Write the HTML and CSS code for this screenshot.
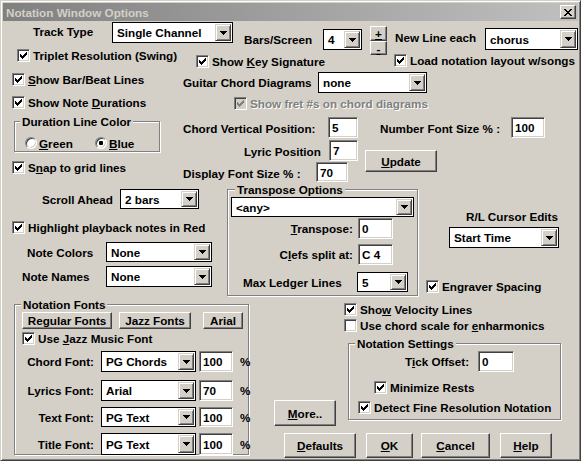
FILE: index.html
```html
<!DOCTYPE html>
<html lang="en">

<head>
    <meta charset="UTF-8">
    <meta name="viewport" content="width=device-width, initial-scale=1.0">
    <title>Notation Window Options</title>
    <link rel="stylesheet" href="styles.css">
</head>

<body>
    <div class="window">
        <div class="titlebar">
            <span class="title">Notation Window Options</span>
            <button class="close-btn" type="button">
                <svg width="8" height="7" viewBox="0 0 8 7" shape-rendering="crispEdges">
                    <path d="M0 0h2v1h-2zM6 0h2v1h-2zM1 1h2v1h-2zM5 1h2v1h-2zM2 2h4v1h-4zM3 3h2v1h-2zM2 4h4v1h-4zM1 5h2v1h-2zM5 5h2v1h-2zM0 6h2v1h-2zM6 6h2v1h-2z" />
                </svg>
            </button>
        </div>

        <div class="client">
            <!-- Display options -->
            <div class="band">
                <div class="col-display">
                    <div class="row track-row">
                        <span class="lbl track-lbl">Track Type</span>
                        <div class="combo track-combo"><span class="val">Single Channel</span><span class="drop"></span></div>
                    </div>
                    <label class="check triplet"><span class="box on"></span><span>Triplet Resolution (Swing)</span></label>
                    <label class="check bar-lines"><span class="box on"></span><span><u>S</u>how Bar/Beat Lines</span></label>
                    <label class="check note-durations"><span class="box on"></span><span>Show Note <u>D</u>urations</span></label>
                    <div class="group duration-group">
                        <span class="group-title">Duration Line Color</span>
                        <div class="radios">
                            <label class="radio green"><span class="dot"></span><span><u>G</u>reen</span></label>
                            <label class="radio"><span class="dot on"></span><span><u>B</u>lue</span></label>
                        </div>
                    </div>
                    <label class="check snap"><span class="box on"></span><span>S<u>n</u>ap to grid lines</span></label>
                </div>

                <div class="col-layout">
                    <div class="spin-row">
                        <span class="lbl bars-lbl">Bars/Screen</span>
                        <div class="combo bars-combo"><span class="val">4</span><span class="drop"></span></div>
                        <div class="spin">
                            <button class="btn spin-up" type="button"><span><u>+</u></span></button>
                            <button class="btn spin-down" type="button"><span><u>-</u></span></button>
                        </div>
                        <span class="lbl newline-lbl">New Line each</span>
                        <div class="combo chorus-combo"><span class="val">chorus</span><span class="drop"></span></div>
                    </div>
                    <div class="keysig-row">
                        <label class="check keysig"><span class="box on"></span><span>Show <u>K</u>ey Signature</span></label>
                        <label class="check"><span class="box on"></span><span>Load notation layout w/songs</span></label>
                    </div>
                    <div class="row guitar-row">
                        <span class="lbl guitar-lbl">Guitar Chord Diagrams</span>
                        <div class="combo guitar-combo"><span class="val">none</span><span class="drop"></span></div>
                    </div>
                    <label class="check disabled fret"><span class="box on"></span><span>Show fret #s on chord diagrams</span></label>

                    <div class="pos-block">
                        <div class="pos-a">
                            <div class="row pos-row">
                                <span class="lbl chord-pos-lbl">Chord Vertical Position:</span>
                                <div class="edit chord-pos-edit">5</div>
                            </div>
                            <div class="row pos-row lyric-row">
                                <span class="lbl lyric-lbl">Lyric Position</span>
                                <div class="edit lyric-edit">7</div>
                            </div>
                            <div class="row display-row">
                                <span class="lbl display-lbl">Display Font Size % :</span>
                                <div class="edit display-edit">70</div>
                            </div>
                        </div>
                        <div class="pos-b">
                            <div class="row pos-row numfont-row">
                                <span class="lbl numfont-lbl">Number Font Size % :</span>
                                <div class="edit numfont-edit">100</div>
                            </div>
                            <button class="btn update-btn" type="button"><span><u>U</u>pdate</span></button>
                        </div>
                    </div>
                </div>
            </div>

            <!-- Playback, transpose and cursor options -->
            <div class="band">
                <div class="col-lists">
                    <div class="row scroll-row">
                        <span class="lbl scroll-lbl">Scroll Ahead</span>
                        <div class="combo scroll-combo"><span class="val">2 bars</span><span class="drop"></span></div>
                    </div>
                    <label class="check highlight"><span class="box on"></span><span>Highlight playback notes in Red</span></label>
                    <div class="row colors-row">
                        <span class="lbl colors-lbl">Note Colors</span>
                        <div class="combo note-combo"><span class="val">None</span><span class="drop"></span></div>
                    </div>
                    <div class="row names-row">
                        <span class="lbl names-lbl">Note Names</span>
                        <div class="combo note-combo"><span class="val">None</span><span class="drop"></span></div>
                    </div>
                </div>

                <div class="group transpose-group">
                    <span class="group-title">Transpose Options</span>
                    <div class="combo any-combo"><span class="val">&lt;any&gt;</span><span class="drop"></span></div>
                    <div class="row transpose-row">
                        <span class="lbl key-lbl"><u>T</u>ranspose:</span>
                        <div class="edit key-edit">0</div>
                    </div>
                    <div class="row clefs-row">
                        <span class="lbl key-lbl">C<u>l</u>efs split at:</span>
                        <div class="edit key-edit">C 4</div>
                    </div>
                    <div class="row ledger-row">
                        <span class="lbl ledger-lbl">Max Ledger Lines</span>
                        <div class="combo ledger-combo"><span class="val">5</span><span class="drop"></span></div>
                    </div>
                </div>

                <div class="col-cursor">
                    <div class="lbl rl-lbl">R/L Cursor Edits</div>
                    <div class="combo rl-combo"><span class="val">Start Time</span><span class="drop"></span></div>
                    <label class="check engraver"><span class="box on"></span><span>Engraver Spacing</span></label>
                </div>
            </div>

            <!-- Fonts, notation settings and dialog buttons -->
            <div class="band">
                <div class="group fonts-group">
                    <span class="group-title">Notation Fonts</span>
                    <div class="font-buttons">
                        <button class="btn regular-btn" type="button">Regular Fonts</button>
                        <button class="btn jazz-btn" type="button">Jazz Fonts</button>
                        <button class="btn arial-btn" type="button">Arial</button>
                    </div>
                    <label class="check jazz-font"><span class="box on"></span><span>Use <u>J</u>azz Music Font</span></label>
                    <div class="row font-row chord-row">
                        <span class="lbl font-lbl">Chord Font:</span>
                        <div class="combo font-combo"><span class="val">PG Chords</span><span class="drop"></span></div>
                        <div class="edit font-size">100</div>
                        <span class="pct">%</span>
                    </div>
                    <div class="row font-row lyrics-row">
                        <span class="lbl font-lbl">Lyrics Font:</span>
                        <div class="combo font-combo"><span class="val">Arial</span><span class="drop"></span></div>
                        <div class="edit font-size">70</div>
                        <span class="pct">%</span>
                    </div>
                    <div class="row font-row text-row">
                        <span class="lbl font-lbl">Text Font:</span>
                        <div class="combo font-combo"><span class="val">PG Text</span><span class="drop"></span></div>
                        <div class="edit font-size">100</div>
                        <span class="pct">%</span>
                    </div>
                    <div class="row font-row title-row">
                        <span class="lbl font-lbl">Title Font:</span>
                        <div class="combo font-combo"><span class="val">PG Text</span><span class="drop"></span></div>
                        <div class="edit font-size">100</div>
                        <span class="pct">%</span>
                    </div>
                </div>

                <div class="side">
                    <label class="check velocity"><span class="box on"></span><span>Sho<u>w</u> Velocity Lines</span></label>
                    <label class="check chord-scale"><span class="box"></span><span>Use chord scale for <u>e</u>nharmonics</span></label>
                    <div class="more-row">
                        <button class="btn more-btn" type="button"><span><u>M</u>ore..</span></button>
                        <div class="group settings-group">
                            <span class="group-title">Notation Settings</span>
                            <div class="row tick-row">
                                <span class="lbl tick-lbl">T<u>i</u>ck Offset:</span>
                                <div class="edit tick-edit">0</div>
                            </div>
                            <label class="check minimize"><span class="box on"></span><span>Minimize Rests</span></label>
                            <label class="check detect"><span class="box on"></span><span>Detect Fine Resolution Notation</span></label>
                        </div>
                    </div>
                    <div class="dialog-buttons">
                        <button class="btn defaults-btn" type="button"><span><u>D</u>efaults</span></button>
                        <button class="btn ok-btn" type="button"><span><u>O</u>K</span></button>
                        <button class="btn cancel-btn" type="button"><span><u>C</u>ancel</span></button>
                        <button class="btn help-btn" type="button"><span><u>H</u>elp</span></button>
                    </div>
                </div>
            </div>
        </div>
    </div>
</body>

</html>
```

FILE: styles.css
```css
* {
    box-sizing: border-box;
}

body {
    margin: 0;
    background: #d4d0c8;
    font-family: "Liberation Sans", Arial, sans-serif;
    font-size: 11.7px;
    font-weight: bold;
    line-height: 13px;
    color: #000000;
}

u {
    text-decoration-thickness: 1px;
    text-underline-offset: 1px;
}

/* Window frame */
.window {
    width: 581px;
    height: 461px;
    padding: 2px;
    background: #d4d0c8;
    border: 1px solid;
    border-color: #d4d0c8 #404040 #404040 #d4d0c8;
    box-shadow: inset 1px 1px #ffffff, inset -1px -1px #808080;
}

.titlebar {
    height: 18px;
    display: flex;
    align-items: center;
    padding: 0 2px 0 3px;
    background: linear-gradient(to right, #808080, #c0c0c0);
}

.title {
    flex: 1;
    color: #d4d0c8;
}

.close-btn {
    width: 16px;
    height: 14px;
    padding: 0;
    display: flex;
    align-items: center;
    justify-content: center;
    background: #d4d0c8;
    border: 1px solid;
    border-color: #ffffff #404040 #404040 #ffffff;
    box-shadow: inset -1px -1px #808080;
}

.client {
    height: 437px;
}

.band {
    display: flex;
    align-items: flex-start;
}

.row {
    display: flex;
    align-items: center;
}

.lbl {
    flex: none;
    white-space: nowrap;
}

/* Controls */
.check {
    display: flex;
    align-items: center;
    height: 13px;
    white-space: nowrap;
}

.box {
    flex: none;
    width: 13px;
    height: 13px;
    margin-right: 3px;
    padding: 2px;
    background: #ffffff;
    border: 1px solid;
    border-color: #808080 #ffffff #ffffff #808080;
    box-shadow: inset 1px 1px #404040, inset -1px -1px #d4d0c8;
}

.box.on::after {
    content: "";
    display: block;
    width: 7px;
    height: 7px;
    background:
        linear-gradient(currentColor, currentColor) 6px 0 / 1px 1px,
        linear-gradient(currentColor, currentColor) 5px 1px / 2px 1px,
        linear-gradient(currentColor, currentColor) 0 2px / 1px 1px,
        linear-gradient(currentColor, currentColor) 4px 2px / 3px 1px,
        linear-gradient(currentColor, currentColor) 0 3px / 2px 1px,
        linear-gradient(currentColor, currentColor) 3px 3px / 3px 1px,
        linear-gradient(currentColor, currentColor) 0 4px / 5px 1px,
        linear-gradient(currentColor, currentColor) 1px 5px / 3px 1px,
        linear-gradient(currentColor, currentColor) 2px 6px / 1px 1px;
    background-repeat: no-repeat;
}

.check.disabled {
    color: #808080;
    text-shadow: 1px 1px #ffffff;
}

.check.disabled .box {
    background: #d4d0c8;
}

.radio {
    display: flex;
    align-items: center;
    height: 12px;
    white-space: nowrap;
}

.dot {
    flex: none;
    width: 12px;
    height: 12px;
    margin-right: 2px;
    display: flex;
    align-items: center;
    justify-content: center;
    border-radius: 50%;
    background: #ffffff;
    border: 1px solid;
    border-color: #808080 #ffffff #ffffff #808080;
    box-shadow: inset 1px 1px #404040, inset -1px -1px #d4d0c8;
}

.dot.on::after {
    content: "";
    width: 4px;
    height: 4px;
    border-radius: 1px;
    background: #000000;
}

.combo {
    flex: none;
    display: flex;
    height: 21px;
    padding: 1px;
    background: #ffffff;
    border: 1px solid #000000;
}

.combo .val {
    flex: 1;
    display: flex;
    align-items: center;
    padding-left: 3px;
    white-space: nowrap;
    overflow: hidden;
}

.drop {
    flex: none;
    width: 16px;
    display: flex;
    align-items: center;
    justify-content: center;
    background: #d4d0c8;
    border: 1px solid;
    border-color: #d4d0c8 #404040 #404040 #d4d0c8;
    box-shadow: inset 1px 1px #ffffff, inset -1px -1px #808080;
}

.drop::after {
    content: "";
    width: 7px;
    height: 4px;
    background:
        linear-gradient(#000, #000) 0 0 / 7px 1px,
        linear-gradient(#000, #000) 1px 1px / 5px 1px,
        linear-gradient(#000, #000) 2px 2px / 3px 1px,
        linear-gradient(#000, #000) 3px 3px / 1px 1px;
    background-repeat: no-repeat;
}

.edit {
    flex: none;
    height: 21px;
    display: flex;
    align-items: center;
    padding-left: 3px;
    background: #ffffff;
    border: 1px solid;
    border-color: #808080 #ffffff #ffffff #808080;
    box-shadow: inset 1px 1px #404040, inset -1px -1px #d4d0c8;
}

.btn {
    flex: none;
    display: flex;
    align-items: center;
    justify-content: center;
    padding: 0;
    font: inherit;
    color: #000000;
    background: #d4d0c8;
    border: 1px solid;
    border-color: #ffffff #404040 #404040 #ffffff;
    box-shadow: inset -1px -1px #808080;
}

.group {
    flex: none;
    border: 1px solid #808080;
    box-shadow: inset 1px 1px #ffffff, 1px 1px #ffffff;
}

.group-title {
    display: block;
    width: max-content;
    height: 13px;
    margin-top: -7px;
    padding: 0 2px;
    background: #d4d0c8;
}

/* Display options column */
.col-display {
    flex: none;
    width: 180px;
}

.track-row {
    height: 21px;
    margin-top: 1px;
    padding-left: 30px;
}

.track-lbl {
    width: 79px;
    padding-bottom: 3px;
}

.track-combo {
    width: 121px;
}

.triplet {
    margin: 6px 0 0 14px;
}

.bar-lines {
    margin: 11px 0 0 9px;
}

.note-durations {
    margin: 10px 0 0 9px;
}

.duration-group {
    width: 146px;
    height: 31px;
    margin: 12px 0 0 11px;
}

.duration-group .group-title {
    margin-left: 5px;
}

.radios {
    display: flex;
    margin: 9px 0 0 10px;
}

.radio.green {
    width: 70px;
}

.snap {
    margin: 9px 0 0 9px;
}

/* Layout column */
.col-layout {
    flex: none;
    width: 395px;
}

.spin-row {
    display: flex;
    align-items: flex-start;
    margin-top: 5px;
    padding-left: 61px;
}

.bars-lbl {
    width: 79px;
    margin-top: 7px;
}

.bars-combo {
    width: 39px;
    margin-top: 3px;
}

.spin {
    display: flex;
    flex-direction: column;
    margin-left: 8px;
}

.spin-up {
    width: 17px;
    height: 15px;
}

.spin-down {
    width: 17px;
    height: 14px;
}

.newline-lbl {
    width: 90px;
    margin: 5px 0 0 8px;
}

.chorus-combo {
    width: 93px;
    height: 22px;
    margin-top: 2px;
}

.keysig-row {
    display: flex;
    align-items: flex-start;
    margin-top: -1px;
}

.keysig {
    width: 198px;
    margin: 1px 0 0 13px;
}

.guitar-row {
    height: 21px;
    margin-top: 4px;
}

.guitar-lbl {
    width: 135px;
}

.guitar-combo {
    width: 109px;
}

.fret {
    margin: 4px 0 0 51px;
}

.pos-block {
    display: flex;
    align-items: flex-start;
    margin-top: 7px;
}

.pos-a {
    flex: none;
    width: 175px;
}

.pos-row {
    height: 21px;
}

.pos-row .lbl,
.display-row .lbl {
    padding-top: 2px;
}

.chord-pos-lbl {
    width: 145px;
}

.chord-pos-edit {
    width: 30px;
}

.lyric-row {
    margin: 2px 0 0 61px;
}

.lyric-lbl {
    width: 85px;
}

.lyric-edit {
    width: 29px;
}

.display-row {
    height: 20px;
    margin-top: 1px;
}

.display-lbl {
    width: 133px;
}

.display-edit {
    width: 32px;
    height: 20px;
}

.pos-b {
    margin-left: 7px;
}

.numfont-row {
    margin-left: 15px;
}

.numfont-lbl {
    width: 131px;
}

.numfont-edit {
    width: 34px;
}

.update-btn {
    width: 72px;
    height: 22px;
    margin-top: 12px;
}

/* Playback column */
.col-lists {
    flex: none;
    width: 224px;
}

.scroll-row {
    height: 20px;
    margin-top: 7px;
    padding-left: 39px;
}

.scroll-lbl {
    width: 78px;
}

.scroll-combo {
    width: 79px;
    height: 20px;
}

.highlight {
    margin: 12px 0 0 9px;
}

.colors-row {
    height: 20px;
    margin: 8px 0 0 24px;
}

.colors-lbl {
    width: 79px;
}

.names-row {
    height: 21px;
    margin: 4px 0 0 19px;
}

.names-lbl {
    width: 84px;
}

.note-combo {
    width: 106px;
}

.colors-row .note-combo {
    height: 20px;
}

/* Transpose box */
.transpose-group {
    width: 191px;
    height: 107px;
    margin-top: 7px;
}

.transpose-group .group-title {
    margin-left: 7px;
}

.any-combo {
    width: 183px;
    height: 20px;
    margin: 1px 0 0 3px;
}

.transpose-row {
    height: 21px;
    margin-top: 1px;
}

.clefs-row {
    height: 21px;
    margin-top: 5px;
}

.key-lbl {
    width: 130px;
    padding-right: 5px;
    text-align: right;
}

.key-edit {
    width: 35px;
}

.ledger-row {
    height: 20px;
    margin: 7px 0 0 15px;
}

.ledger-lbl {
    width: 114px;
}

.ledger-combo {
    width: 51px;
    height: 20px;
}

/* Cursor column */
.col-cursor {
    flex: none;
    width: 160px;
}

.rl-lbl {
    margin: 28px 0 0 48px;
}

.rl-combo {
    width: 110px;
    margin: 4px 0 0 31px;
}

.engraver {
    margin: 32px 0 0 8px;
}

/* Notation fonts box */
.fonts-group {
    width: 235px;
    height: 151px;
    margin: 8px 0 0 11px;
}

.fonts-group .group-title {
    margin-left: 6px;
}

.font-buttons {
    display: flex;
    margin: 1px 0 0 7px;
}

.font-buttons .btn {
    height: 17px;
}

.regular-btn {
    width: 90px;
}

.jazz-btn {
    width: 72px;
    margin-left: 7px;
}

.arial-btn {
    width: 40px;
    margin-left: 12px;
}

.jazz-font {
    margin: 3px 0 0 7px;
}

.font-row {
    height: 21px;
}

.chord-row {
    margin-top: 6px;
}

.lyrics-row {
    margin-top: 8px;
}

.text-row {
    height: 20px;
    margin-top: 6px;
}

.title-row {
    height: 22px;
    margin-top: 6px;
}

.font-lbl {
    width: 79px;
    text-align: right;
}

.font-combo {
    width: 95px;
    height: 100%;
    margin-left: 7px;
}

.font-size {
    width: 34px;
    height: 100%;
    margin-left: 3px;
}

.pct {
    margin-left: 7px;
}

/* Right side of the bottom band */
.side {
    flex: none;
    width: 304px;
    margin-left: 25px;
}

.velocity {
    margin: 7px 0 0 70px;
}

.chord-scale {
    margin: 3px 0 0 70px;
}

.more-row {
    display: flex;
    align-items: flex-start;
    margin-top: 11px;
}

.more-btn {
    width: 62px;
    height: 26px;
    margin-top: 57px;
}

.settings-group {
    width: 213px;
    height: 77px;
    margin-left: 12px;
}

.settings-group .group-title {
    margin-left: 6px;
}

.tick-row {
    height: 21px;
    margin: 1px 0 0 56px;
}

.tick-lbl {
    width: 73px;
}

.tick-edit {
    width: 36px;
}

.minimize {
    margin: 9px 0 0 25px;
}

.detect {
    margin: 7px 0 0 9px;
}

.dialog-buttons {
    display: flex;
    margin-top: 7px;
}

.dialog-buttons .btn {
    height: 25px;
}

.defaults-btn {
    width: 72px;
    margin-left: 10px;
}

.ok-btn {
    width: 47px;
    margin-left: 10px;
}

.cancel-btn {
    width: 69px;
    margin-left: 8px;
}

.help-btn {
    width: 52px;
    margin-left: 10px;
}
```
